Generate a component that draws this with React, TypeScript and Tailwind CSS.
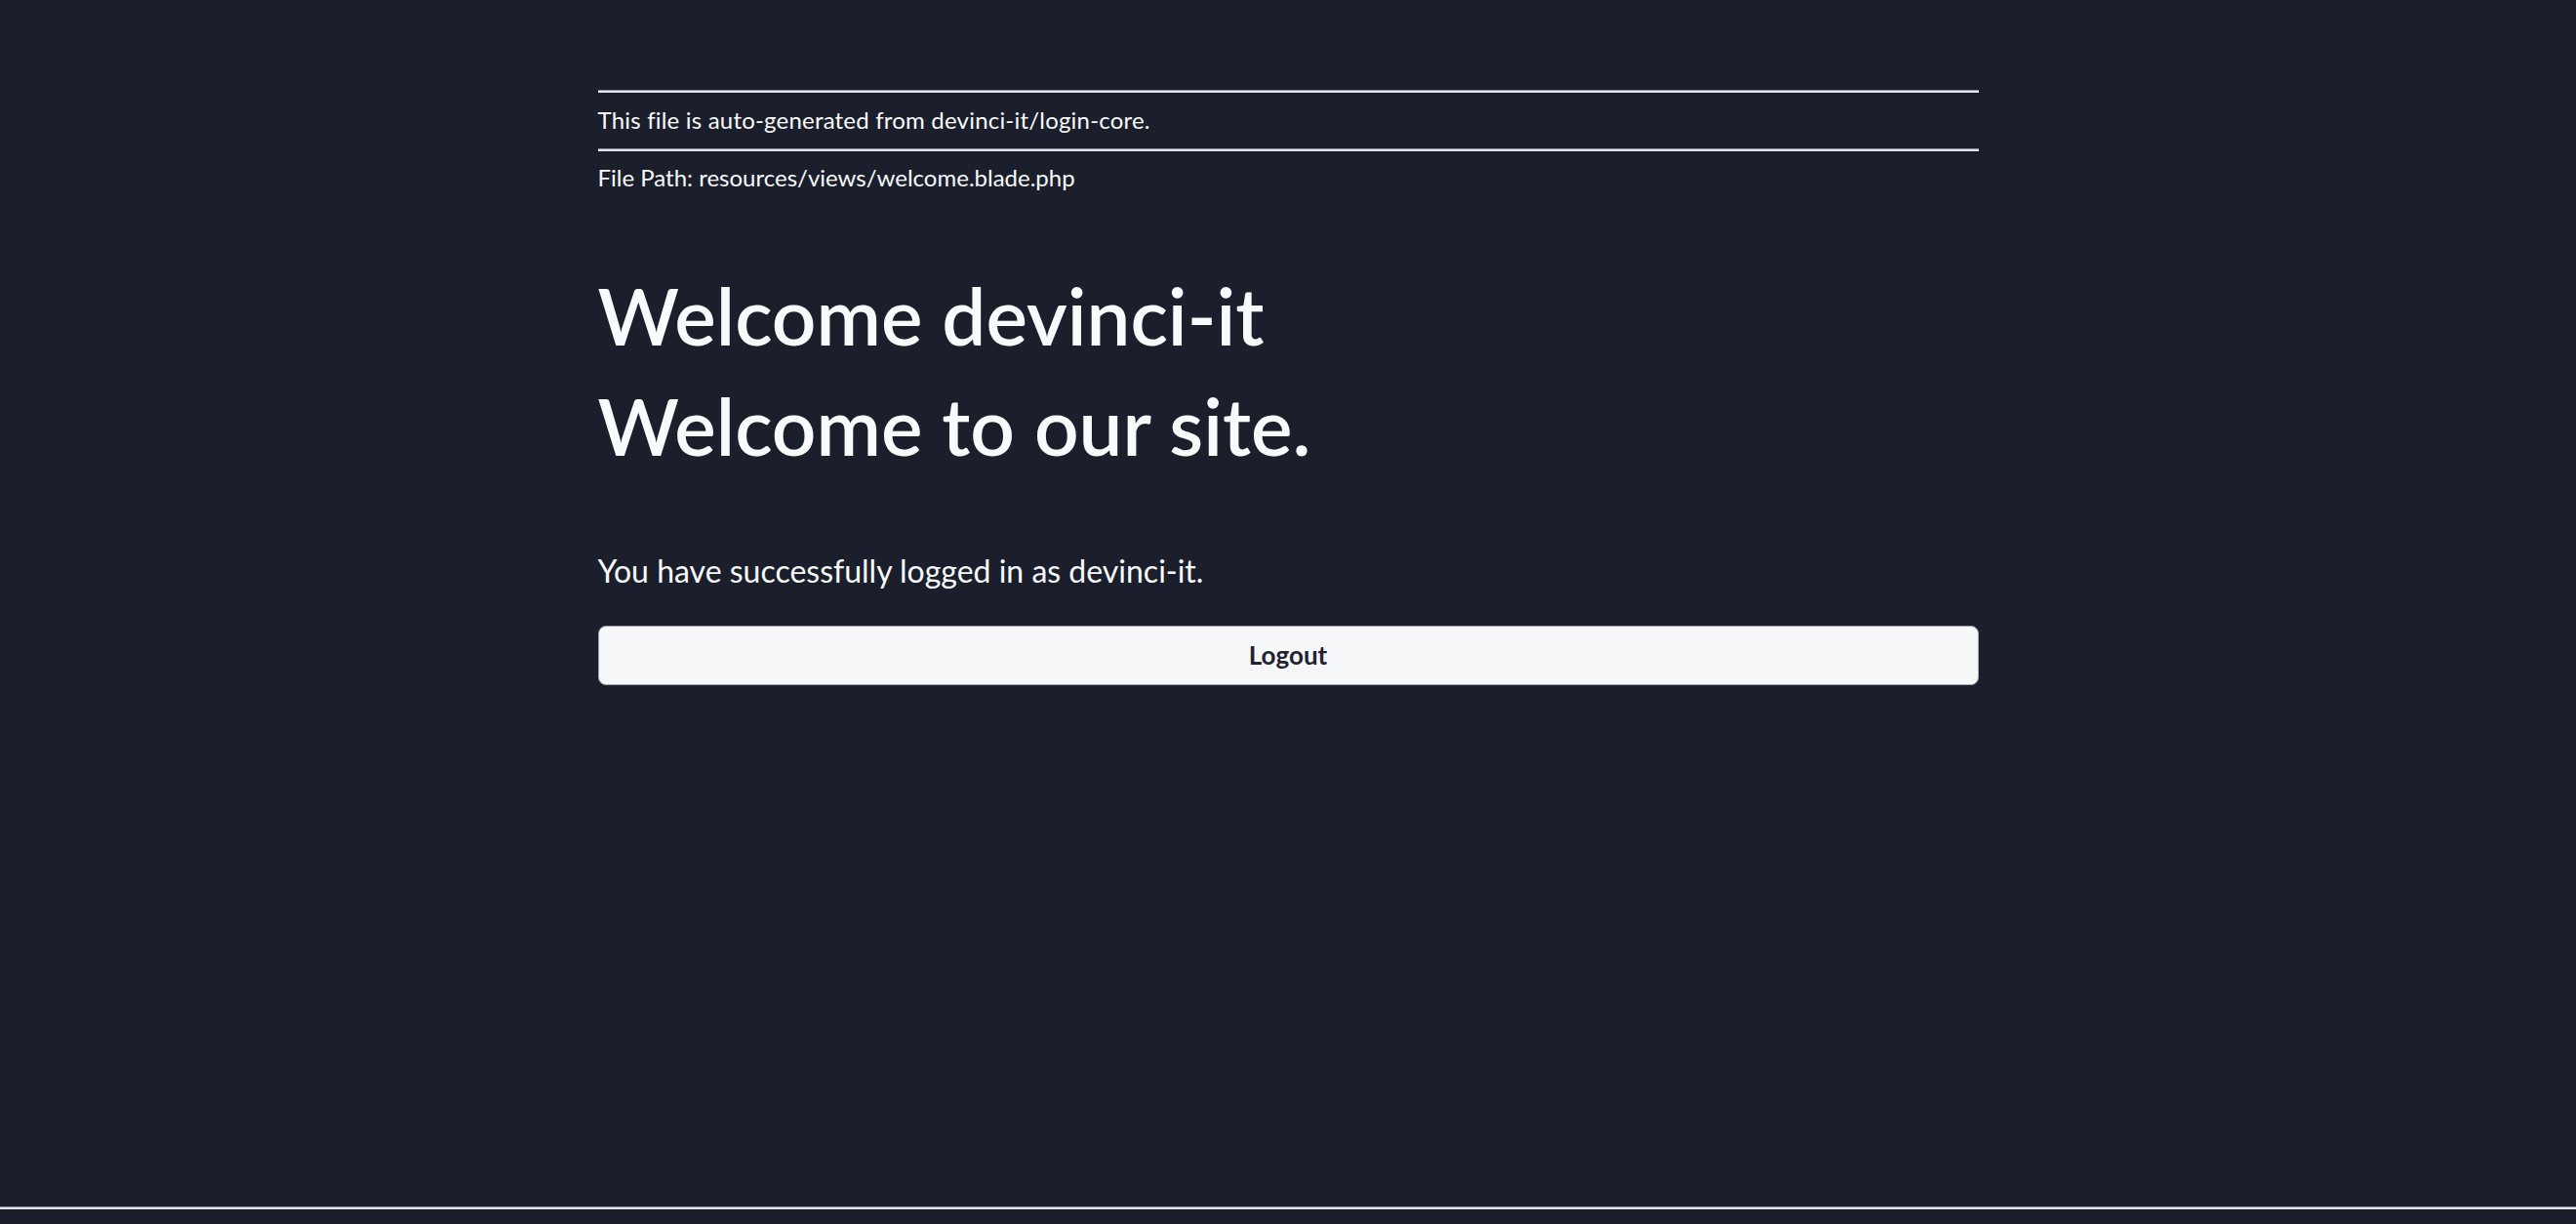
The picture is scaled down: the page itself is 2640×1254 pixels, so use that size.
import React from "react";

function Rule() {
  return <div className="h-[3px] w-full border-t border-[#8d9098] bg-[#e4e6ea]" />;
}

export default function App() {
  return (
    <div
      className="flex min-h-[1254px] w-full flex-col bg-[#1b1f2b] text-[#f9fafb]"
      style={{ fontFamily: "Lato, 'Noto Sans', sans-serif" }}
    >
      <main className="mx-auto flex w-[1415px] flex-1 flex-col pt-[92px]">
        <Rule />
        <p className="mt-[10px] text-[24px] leading-[36px] tracking-[0.2px]">
          This file is auto-generated from devinci-it/login-core.
        </p>
        <div className="mt-[11px]">
          <Rule />
        </div>
        <p className="mt-[9px] text-[24px] leading-[36px]">
          File Path: resources/views/welcome.blade.php
        </p>
        <h1 className="mt-[67px] text-[80px] font-semibold leading-[113px]">
          Welcome devinci-it
          <br />
          Welcome to our site.
        </h1>
        <p className="mt-[69px] text-[32px] leading-[46px]">
          You have successfully logged in as devinci-it.
        </p>
        <button className="mt-[33px] h-[61px] w-full rounded-[8px] border border-[#9ca0a8] bg-[#f6f7f9] text-[26px] font-bold text-[#1f2430]">
          Logout
        </button>
      </main>
      <div className="mb-[15px] h-[3px] w-full border-t border-[#8d9098] bg-[#e4e6ea]" />
    </div>
  );
}
